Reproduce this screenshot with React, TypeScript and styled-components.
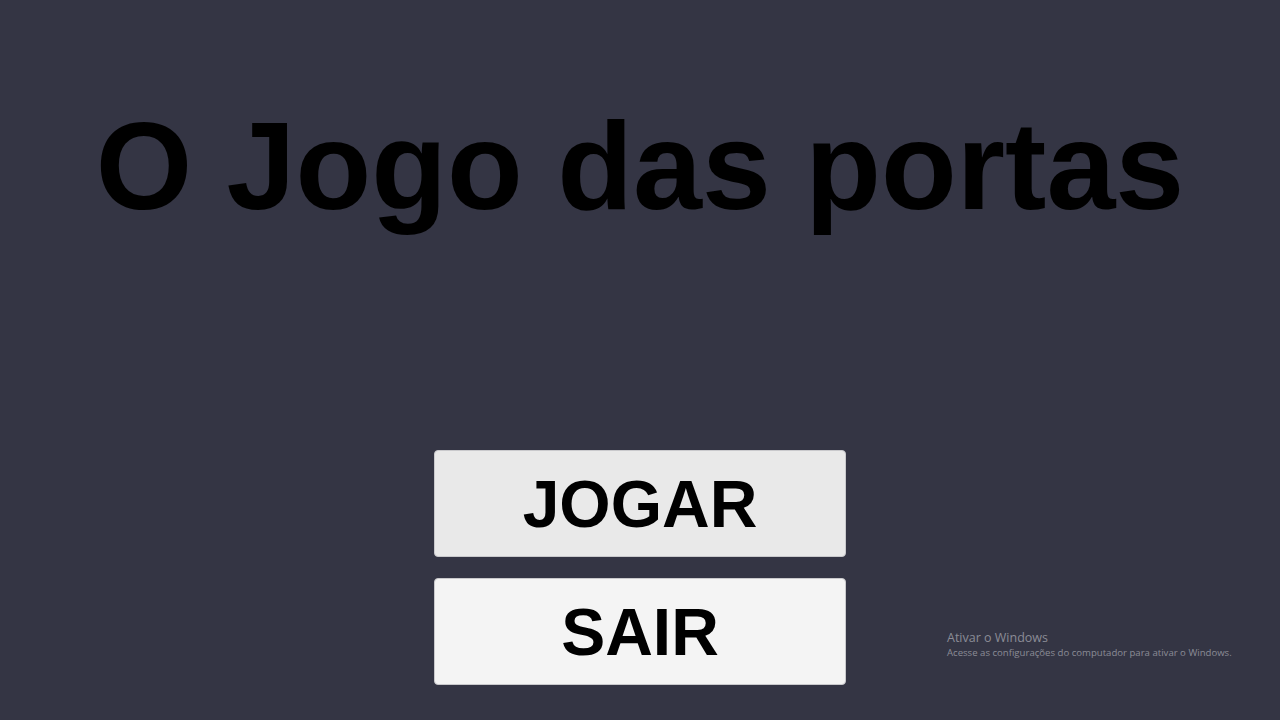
import styled, { createGlobalStyle } from 'styled-components'

const GlobalStyle = createGlobalStyle`
  html, body {
    margin: 0;
    padding: 0;
    background: #343544;
  }
  body {
    font-family: "Liberation Sans", Arial, sans-serif;
  }
`

const Screen = styled.div`
  position: relative;
  width: 1280px;
  height: 720px;
  display: flex;
  flex-direction: column;
  align-items: center;
  background: #343544;
  overflow: hidden;
`

const Title = styled.h1`
  margin: 104px 0 0;
  font-family: "Liberation Sans", Arial, sans-serif;
  font-weight: bold;
  font-size: 124px;
  line-height: 1;
  color: #000;
  white-space: nowrap;
`

const Menu = styled.div`
  margin-top: 222px;
  display: flex;
  flex-direction: column;
  gap: 21px;
`

const MenuButton = styled.button<{ $shade: string }>`
  width: 412px;
  height: 107px;
  padding: 0;
  border: 1px solid #c9c9cc;
  border-radius: 4px;
  background: ${(p) => p.$shade};
  font-family: "Liberation Sans", Arial, sans-serif;
  font-weight: bold;
  font-size: 66px;
  line-height: 1;
  color: #000;
  cursor: pointer;
`

const Watermark = styled.div`
  position: absolute;
  left: 947px;
  top: 630px;
  font-family: "Open Sans", "Noto Sans", sans-serif;
  color: #8b8c96;
`

const WatermarkTitle = styled.div`
  font-size: 12.5px;
  line-height: 16px;
`

const WatermarkText = styled.div`
  font-size: 9.6px;
  line-height: 14px;
`

export default function App() {
  return (
    <Screen>
      <GlobalStyle />
      <Title>O Jogo das portas</Title>
      <Menu>
        <MenuButton $shade="#e9e9e9">JOGAR</MenuButton>
        <MenuButton $shade="#f4f4f4">SAIR</MenuButton>
      </Menu>
      <Watermark>
        <WatermarkTitle>Ativar o Windows</WatermarkTitle>
        <WatermarkText>Acesse as configurações do computador para ativar o Windows.</WatermarkText>
      </Watermark>
    </Screen>
  )
}
